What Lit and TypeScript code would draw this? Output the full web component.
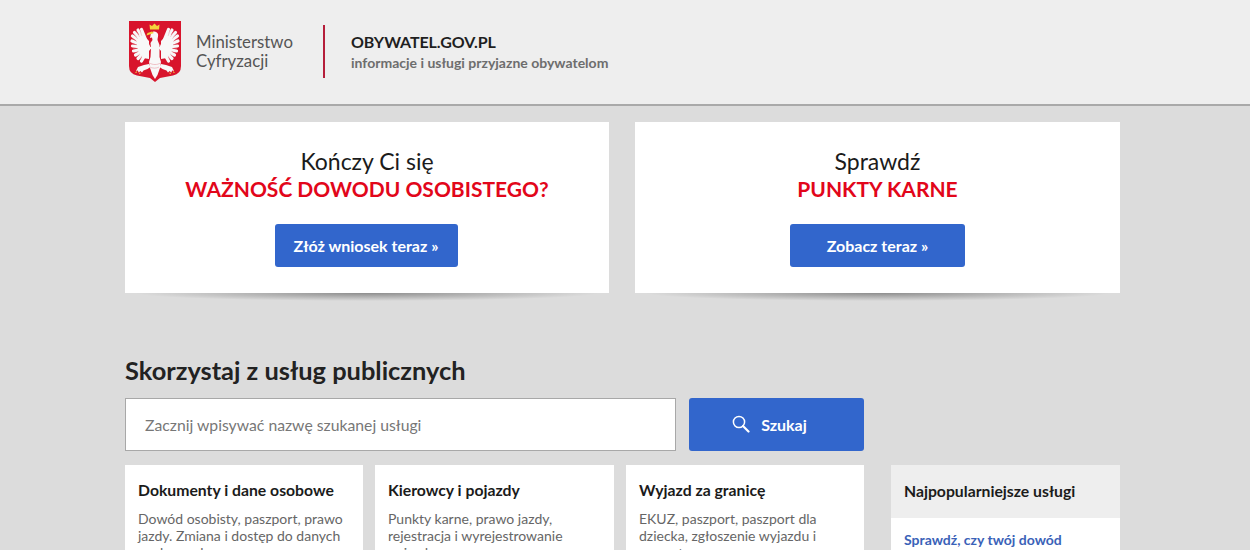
import {LitElement, html, css, svg} from 'lit';
import {customElement} from 'lit/decorators.js';

// wing feather tips, left wing, right one is mirrored
const tips = [
  [12.5, 8.5], [9, 9], [5.5, 11.5], [3.5, 15], [3, 20], [3.5, 25],
  [4.5, 30], [6.5, 34], [9, 37.5], [12.5, 40],
];

const wing = svg`
  <g stroke="#f8f8f8" stroke-width="3.200" stroke-linecap="round">
    ${tips.map(([x, y]) => svg`<path d="M20 27L${x} ${y}"/>`)}
  </g>
  <path fill="#f8f8f8" d="M20 20L12 12 7 18 9 30 14 37 20 38z"/>
  <g stroke="#e58a94" stroke-width=".4">
    ${tips.slice(1).map(([x, y], i) => {
      const mx = (x + tips[i][0]) / 2;
      const my = (y + tips[i][1]) / 2;
      return svg`<path d="M${(mx * 2 + 17) / 3} ${(my * 2 + 27) / 3}L${mx} ${my}"/>`;
    })}
  </g>
  <path fill="#f8f8f8" d="M20 43l-5 1-6 2-2 4 2-.5 .5 2 2-1.500 1.500 1.500 1.500-2 4-1.500 3-2z"/>
  <path fill="#f4d33c" d="M7.500 50l-1.500 2 2-.5zM10.500 51.500l-.5 2 2-1.500z"/>
`;

const eagle = svg`
  <path fill="#d8142c" d="M0 0H52V45Q52 53 44 54.500L31 57 26 61 21 57 8 54.500Q0 53 0 45Z"/>
  ${wing}
  <g transform="translate(52 0) scale(-1 1)">${wing}</g>
  <path fill="#f8f8f8" d="M22 12c2-2.500 6-2 7 1 .5 2-.5 4-.5 6l2 5v12l1.500 5-1 6-2.500 7-2.500 4-2.500-4-2.500-7-1-6 1.500-5 .5-9-.5-5 2-3-.5-2.500-2 .5z"/>
  <path fill="none" stroke="#e58a94" stroke-width=".5" d="M20.500 42c3 2 8 2 11 0M21 46c2 1.500 7 1.500 9 0"/>
  <path fill="#f4d33c" d="M21 8.500l-.5-5 2.500 1.500 2.500-2.500 2.500 2.500 2.500-1.500-.5 5z"/>
  <path fill="#f4d33c" d="M23 10.500l-4.500 1.500-1 2.500 4.500-1.500 3-1z"/>
`;

@customElement('app-root')
export class AppRoot extends LitElement {
  render() {
    return html`
      <header class="top">
        <div class="top-in">
          <svg class="emblem" viewBox="0 0 52 61" aria-hidden="true">${eagle}</svg>
          <div class="ministry">Ministerstwo<br />Cyfryzacji</div>
          <div class="sep"></div>
          <div class="site">
            <div class="site-name">OBYWATEL.GOV.PL</div>
            <div class="site-sub">informacje i usługi przyjazne obywatelom</div>
          </div>
        </div>
      </header>

      <section class="promos">
        <div class="promo">
          <div class="promo-q">Kończy Ci się</div>
          <div class="promo-red">WAŻNOŚĆ DOWODU OSOBISTEGO?</div>
          <a class="btn promo-btn wide">Złóż wniosek teraz »</a>
        </div>
        <div class="promo">
          <div class="promo-q">Sprawdź</div>
          <div class="promo-red">PUNKTY KARNE</div>
          <a class="btn promo-btn">Zobacz teraz »</a>
        </div>
      </section>

      <main class="services">
        <h1>Skorzystaj z usług publicznych</h1>
        <div class="layout">
          <div class="left">
            <div class="search">
              <div class="input">Zacznij wpisywać nazwę szukanej usługi</div>
              <a class="btn search-btn">
                <svg class="loupe" viewBox="0 0 18 18" aria-hidden="true">
                  <circle cx="7" cy="7" r="5.600" fill="none" stroke="#fff" stroke-width="1.500" />
                  <path d="M11 11l5.500 5.500" stroke="#fff" stroke-width="2.200" stroke-linecap="round" />
                </svg>
                Szukaj
              </a>
            </div>
            <div class="cards">
              <article class="card">
                <h2>Dokumenty i dane osobowe</h2>
                <p>Dowód osobisty, paszport, prawo jazdy. Zmiana i dostęp do danych osobowych</p>
              </article>
              <article class="card">
                <h2>Kierowcy i pojazdy</h2>
                <p>Punkty karne, prawo jazdy, rejestracja i wyrejestrowanie pojazdu</p>
              </article>
              <article class="card">
                <h2>Wyjazd za granicę</h2>
                <p>EKUZ, paszport, paszport dla dziecka, zgłoszenie wyjazdu i powrotu</p>
              </article>
            </div>
          </div>
          <aside class="side">
            <div class="side-head">Najpopularniejsze usługi</div>
            <div class="side-body"><a>Sprawdź, czy twój dowód</a></div>
          </aside>
        </div>
      </main>
    `;
  }

  static styles = css`
    :host {
      display: block;
      height: 550px;
      overflow: hidden;
      background: #dcdcdc;
      font-family: Lato, 'Noto Sans', sans-serif;
      color: #1b1b1b;
    }
    .top {
      height: 104px;
      background: #eeeeee;
      border-bottom: 2px solid #a9a9a9;
    }
    .top-in {
      display: flex;
      align-items: center;
      height: 104px;
      padding-left: 129px;
    }
    .emblem {
      width: 52px;
      height: 61px;
      margin-top: -1px;
    }
    .ministry {
      margin-left: 15px;
      width: 127px;
      font-size: 16.800px;
      line-height: 19px;
      color: #555;
      margin-top: -3px;
    }
    .sep {
      width: 2px;
      height: 53px;
      background: #b51e3a;
      margin-top: -1px;
    }
    .site {
      margin-left: 26px;
      margin-top: -1px;
    }
    .site-name {
      font-size: 16px;
      font-weight: 700;
      line-height: 22px;
      color: #1f1f1f;
      letter-spacing: -0.1px;
    }
    .site-sub {
      font-size: 14px;
      font-weight: 700;
      line-height: 19px;
      color: #6d6d6d;
    }
    .promos {
      display: grid;
      grid-template-columns: 484px 485px;
      gap: 26px;
      margin: 16px 0 0 125px;
    }
    .promo {
      position: relative;
      height: 171px;
      background: #fff;
      display: flex;
      flex-direction: column;
      align-items: center;
      padding-top: 26px;
      box-sizing: border-box;
    }
    .promo::after {
      content: '';
      position: absolute;
      left: 2%;
      right: 2%;
      top: 100%;
      height: 8px;
      background: radial-gradient(ellipse 50% 100% at 50% 0, rgba(0, 0, 0, 0.36), rgba(0, 0, 0, 0) 100%);
    }
    .promo-q {
      font-size: 23px;
      line-height: 27px;
    }
    .promo-red {
      font-size: 21px;
      line-height: 28px;
      font-weight: 700;
      color: #e2061a;
    }
    .btn {
      display: flex;
      align-items: center;
      justify-content: center;
      box-sizing: border-box;
      background: #3266cc;
      border-radius: 3px;
      color: #fff;
      font-weight: 700;
    }
    .promo-btn {
      width: 175px;
      height: 43px;
      margin-top: 21px;
      font-size: 16px;
    }
    .promo-btn.wide {
      width: 183px;
      margin-right: 2px;
    }
    .services {
      margin: 0 0 0 125px;
      width: 995px;
      padding-top: 61px;
    }
    h1 {
      margin: 0;
      font-size: 25.400px;
      line-height: 32px;
      font-weight: 700;
      color: #222;
    }
    .layout {
      display: grid;
      grid-template-columns: 739px 229px;
      gap: 27px;
      margin-top: 12px;
    }
    .search {
      display: flex;
      gap: 13px;
      height: 53px;
    }
    .input {
      flex: 1;
      box-sizing: border-box;
      display: flex;
      align-items: center;
      padding-left: 19px;
      background: #fff;
      border: 1px solid #a8a8a8;
      font-size: 15.750px;
      color: #777;
    }
    .search-btn {
      width: 175px;
      font-size: 16px;
      gap: 11px;
      padding-right: 14px;
    }
    .loupe {
      width: 18px;
      height: 18px;
      margin-top: -1px;
    }
    .cards {
      display: grid;
      grid-template-columns: 238px 239px 238px;
      gap: 12px;
      margin-top: 14px;
    }
    .card {
      background: #fff;
      padding: 15px 13px 0;
      height: 120px;
      box-sizing: border-box;
    }
    h2 {
      margin: 0 0 10px;
      font-size: 15.750px;
      line-height: 20px;
      font-weight: 700;
      color: #1b1b1b;
    }
    p {
      margin: 0;
      font-size: 14px;
      line-height: 17px;
      color: #666;
    }
    .side {
      margin-top: 67px;
      background: #fff;
    }
    .side-head {
      height: 53px;
      box-sizing: border-box;
      background: #eeeeee;
      padding: 16px 13px 0;
      font-size: 15.750px;
      line-height: 20px;
      font-weight: 700;
    }
    .side-body {
      padding: 13px 13px 0;
      font-size: 14px;
      line-height: 18px;
      font-weight: 700;
      color: #3a62b8;
    }
  `;
}

declare global {
  interface HTMLElementTagNameMap {
    'app-root': AppRoot;
  }
}
